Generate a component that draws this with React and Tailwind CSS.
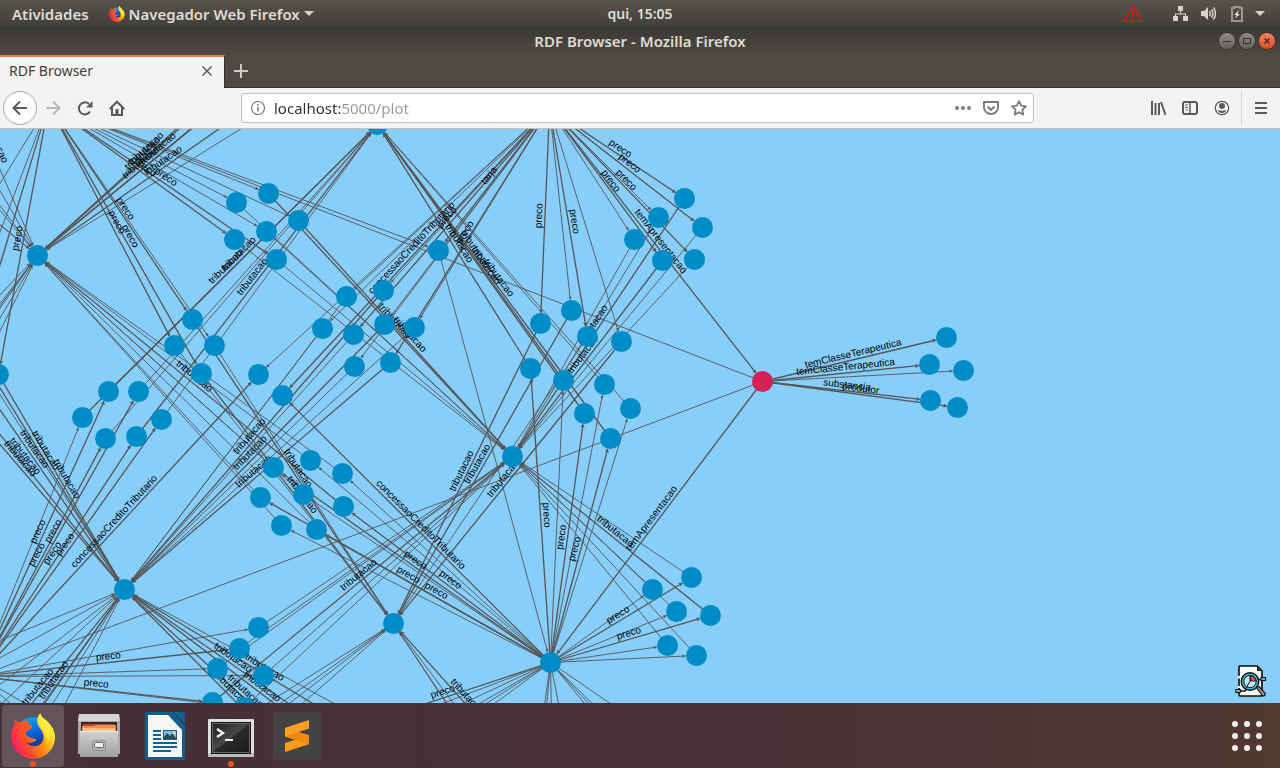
import React from "react";

/* ---------- Graph data ---------- */

const HUBS = {
  A: [37, 255],
  B: [124, 589],
  C: [393, 623],
  D: [550, 662],
  E: [512, 456],
  F: [377, 124],
  G: [549, 108],
  H: [48, 104],
  I: [-22, 676],
  K: [762, 381],
  T: [438, 250],
  U: [258, 374],
  V: [282, 395],
  W: [-2, 374],
};

const P = "preco";
const T = "tributacao";
const CC = "concessaoCreditoTributario";
const NONE = "";

/* Each group: points, the hub that feeds them, the hub they lead to,
   and which of the points carry a written label on either side. */
const GROUPS = [
  { from: "G", to: "E", pts: [[684, 198, 1, 1], [702, 227, 1, 0], [658, 217, 0, 0], [634, 239, 0, 0], [662, 260, 1, 1], [694, 259, 1, 0]] },
  { from: "G", to: "C", pts: [[540, 323, 1, 1], [571, 310, 0, 1], [587, 336, 1, 0], [621, 341, 0, 1]] },
  { from: "D", to: "F", pts: [[563, 380, 0, 1], [604, 384, 0, 0], [584, 413, 1, 1], [630, 408, 0, 0], [610, 438, 1, 1], [530, 368, 1, 1]] },
  { from: "G", to: "B", pts: [[346, 296, 0, 0], [383, 290, 0, 1], [322, 328, 0, 0], [353, 334, 1, 0], [384, 324, 0, 1], [414, 327, 0, 0], [354, 366, 0, 0], [390, 362, 1, 1]] },
  { from: "H", to: "E", pts: [[236, 202, 0, 0], [268, 193, 0, 1], [234, 239, 1, 0], [266, 231, 0, 0], [298, 220, 0, 1], [276, 259, 1, 0]] },
  { from: "H", to: "C", pts: [[192, 319, 1, 1], [174, 345, 1, 0], [214, 345, 0, 0], [201, 373, 1, 1]] },
  { from: "D", to: "A", pts: [[310, 460, 0, 0], [342, 473, 0, 0], [273, 467, 1, 0], [303, 494, 0, 0], [343, 506, 1, 1], [260, 497, 1, 0], [281, 525, 0, 0], [316, 529, 1, 0]] },
  { from: "I", to: "F", pts: [[108, 391, 1, 1], [138, 391, 1, 0], [82, 417, 0, 1], [105, 438, 1, 0], [136, 436, 1, 1], [161, 419, 1, 0]] },
  { from: "I", to: "E", pts: [[258, 627, 0, 0], [239, 648, 1, 0], [217, 668, 0, 0], [263, 675, 0, 0], [212, 702, 1, 1], [244, 707, 0, 0]] },
  { from: "D", to: "E", pts: [[652, 589, 0, 0], [691, 577, 1, 0], [676, 611, 0, 0], [710, 615, 1, 1], [667, 645, 0, 0], [696, 655, 0, 0]] },
];

const RIGHT_NODES = [
  [946, 337, "temClasseTerapeutica"],
  [929, 364, "temClasseTerapeutica"],
  [963, 370, NONE],
  [930, 400, "substancia"],
  [957, 407, "produtor"],
];

/* Edges whose other end lies outside the visible canvas. */
const INCOMING = {
  A: [
    [251, 79, T], [255, 60, T], [262, 50, T], [285, 50, T], [295, 75, T], [310, 85, NONE],
    [-50, 55, NONE], [-40, 122, NONE], [-60, 126, NONE], [-60, 138, NONE], [-70, 167, NONE], [-80, 160, NONE],
    [-60, 357, NONE], [-50, 366, NONE], [-42, 366, NONE], [-32, 370, NONE], [-56, 380, NONE], [-30, 390, NONE],
  ],
  B: [
    [-44, 317, T], [-60, 301, NONE], [-66, 315, T], [-94, 335, T], [-84, 330, T],
    [-30, 652, NONE], [-60, 690, NONE], [-70, 737, NONE], [-60, 760, NONE], [-40, 791, T], [-8, 777, T], [-20, 790, NONE], [30, 770, NONE], [10, 770, NONE],
    [334, 735, T], [392, 793, T], [398, 755, T], [328, 795, T], [358, 801, T], [420, 750, NONE],
  ],
  C: [[244, 717, NONE], [230, 738, NONE], [256, 728, NONE], [262, 738, NONE], [531, 777, T], [490, 770, NONE], [462, 726, NONE], [500, 765, NONE]],
};

const OUTGOING = {
  D: [
    [338, 732, P], [350, 738, NONE], [366, 748, NONE], [380, 760, NONE], [410, 765, NONE], [420, 745, NONE],
    [536, 760, NONE], [541, 765, NONE], [552, 770, NONE], [572, 775, NONE], [640, 770, NONE], [655, 775, NONE], [680, 790, NONE], [700, 765, NONE],
  ],
  H: [[-2, 374, P], [-30, 360, NONE], [-44, 410, NONE], [-38, 330, NONE], [-60, 280, NONE]],
  I: [[60, 745, NONE], [80, 735, NONE], [50, 760, NONE]],
};

const SPECIAL = [
  ["H", "T", NONE], ["G", "T", "tarja"], ["T", "D", NONE],
  ["G", "U", NONE], ["I", "U", CC], ["G", "V", CC], ["D", "V", CC],
  ["K", "H", NONE], ["K", "I", NONE], ["G", "K", "temApresentacao"], ["K", "D", "temApresentacao"],
  ["W", "B", T],
];

const pointKey = (p) => p[0] + "," + p[1];

function buildGraph() {
  const nodes = new Map();
  const edges = [];
  const link = (s, t, label) => edges.push({ s, t, label });
  Object.entries(HUBS).forEach(([name, p]) => nodes.set(pointKey(p), { p, root: name === "K" }));
  GROUPS.forEach((g) =>
    g.pts.forEach(([x, y, a, b]) => {
      const p = [x, y];
      nodes.set(pointKey(p), { p, root: false });
      link(HUBS[g.from], p, a ? P : NONE);
      link(p, HUBS[g.to], b ? T : NONE);
    })
  );
  RIGHT_NODES.forEach(([x, y, label]) => {
    nodes.set(pointKey([x, y]), { p: [x, y], root: false });
    link(HUBS.K, [x, y], label);
  });
  Object.entries(INCOMING).forEach(([h, list]) => list.forEach(([x, y, l]) => link([x, y], HUBS[h], l)));
  Object.entries(OUTGOING).forEach(([h, list]) => list.forEach(([x, y, l]) => link(HUBS[h], [x, y], l)));
  SPECIAL.forEach(([a, b, l]) => link(HUBS[a], HUBS[b], l));
  return { nodes: [...nodes.values()], edges };
}

const GRAPH = buildGraph();

function Edge({ s, t, label }) {
  const dx = t[0] - s[0];
  const dy = t[1] - s[1];
  const len = Math.hypot(dx, dy);
  const ux = dx / len;
  const uy = dy / len;
  const tip = [t[0] - ux * 10, t[1] - uy * 10];
  const base = [tip[0] - ux * 4, tip[1] - uy * 4];
  const w = label ? 2 : 1.5;
  return (
    <g>
      <line x1={s[0]} y1={s[1]} x2={base[0]} y2={base[1]} stroke="#555555" strokeWidth={label ? 1.3 : 0.9} />
      <polygon
        fill="#555555"
        points={`${tip[0]},${tip[1]} ${base[0] - uy * w},${base[1] + ux * w} ${base[0] + uy * w},${base[1] - ux * w}`}
      />
    </g>
  );
}

function EdgeLabel({ s, t, label }) {
  let a = (Math.atan2(t[1] - s[1], t[0] - s[0]) * 180) / Math.PI;
  if (a > 90) a -= 180;
  if (a < -90) a += 180;
  return (
    <text
      transform={`translate(${(s[0] + t[0]) / 2} ${(s[1] + t[1]) / 2}) rotate(${a})`}
      y={-3}
      textAnchor="middle"
    >
      {label}
    </text>
  );
}

function GraphCanvas() {
  return (
    <svg className="block size-full" role="img" aria-label="RDF graph">
      <g transform="translate(0.5 -128.500)">
        {GRAPH.edges.map((e, i) => <Edge key={i} {...e} />)}
        <g className="fill-black font-['Liberation_Sans',Arial,sans-serif] text-[10px]">
          {GRAPH.edges.filter((e) => e.label).map((e, i) => <EdgeLabel key={i} {...e} />)}
          <text transform="translate(-7 143) rotate(66)" textAnchor="middle">{T}</text>
        </g>
        {GRAPH.nodes.map(({ p, root }) => (
          <circle key={pointKey(p)} cx={p[0]} cy={p[1]} r="10.500" fill={root ? "#d32057" : "#008cc6"} />
        ))}
      </g>
    </svg>
  );
}

/* ---------- Icons ---------- */

function FirefoxIcon({ className, id }) {
  return (
    <svg viewBox="0 0 132 138" className={className} aria-hidden="true">
      <defs>
        <linearGradient id={id + "f"} x1="0" y1="0.75" x2="1" y2="0.25">
          <stop offset="0" stopColor="#f5156c" />
          <stop offset="0.3" stopColor="#ff4a2d" />
          <stop offset="0.62" stopColor="#ff980e" />
          <stop offset="0.85" stopColor="#ffe226" />
          <stop offset="1" stopColor="#fff44f" />
        </linearGradient>
        <linearGradient id={id + "b"} x1="0.3" y1="0" x2="0.6" y2="1">
          <stop offset="0" stopColor="#00a8f4" />
          <stop offset="0.5" stopColor="#0a5fd8" />
          <stop offset="1" stopColor="#1f2a7c" />
        </linearGradient>
      </defs>
      <circle cx="66" cy="62" r="50" fill={`url(#${id}b)`} />
      <path
        fill={`url(#${id}f)`}
        d="M12 18C16 27 21 30 28 28C36 22 46 22 54 25C51 32 54 37 64 39C63 46 58 51 48 54C42 60 43 67 52 71C60 77 70 75 77 80C68 88 60 92 46 88C58 104 84 104 94 86C102 72 96 56 84 42C74 28 77 13 88 1C92 16 104 18 112 28C122 40 132 52 132 72C132 108 104 137 66 137C30 137 2 110 0 72C-1 54 7 38 13 30C10 27 10 22 12 18Z"
      />
      <path fill="#ff3b30" d="M12 18C16 27 21 30 28 28C36 22 46 22 54 25C51 32 54 37 64 39C63 46 58 51 48 54C32 52 14 62 6 48C8 40 10 34 13 30Z" opacity="0.5" />
      <path fill="#fff44f" opacity="0.7" d="M88 1C92 16 104 20 112 34C120 52 118 76 108 94C106 74 100 58 88 43C76 28 78 12 88 1Z" />
    </svg>
  );
}

function FilesIcon() {
  return (
    <svg viewBox="0 0 48 48" className="size-12" aria-hidden="true">
      <defs>
        <linearGradient id="cab" x1="0" y1="0" x2="0" y2="1">
          <stop offset="0" stopColor="#d2d2d2" />
          <stop offset="1" stopColor="#a0a0a0" />
        </linearGradient>
      </defs>
      <path d="M4 2h40l1 9v31H3V11z" fill="#aaa" />
      <path d="M4 2h40l1 7H3z" fill="#d5d5d5" />
      <path d="M6 10h36v11H6z" fill="#352722" />
      <path d="M8 12h32v3H8z" fill="#b6452c" />
      <path d="M7 14h12l2-1h20v7H7z" fill="#f58b46" />
      <path d="M8 16h32v4H8z" fill="#ffc48a" />
      <path d="M5 19h38v26H5z" fill="url(#cab)" />
      <path d="M5 19h38v1H5z" fill="#eee" />
      <rect x="17.500" y="28.500" width="13" height="10" rx="2" fill="#b5b5b5" stroke="#8e8e8e" />
      <rect x="19.500" y="30.500" width="9" height="5" rx="1" fill="#f3f3f3" stroke="#666" />
    </svg>
  );
}

function WriterIcon() {
  return (
    <svg viewBox="0 0 48 48" className="size-12" aria-hidden="true">
      <path d="M6 0h25l13 14v32q0 2-2 2H6q-2 0-2-2V2q0-2 2-2z" fill="#10608f" />
      <path d="M7 3h20l14 15v27H7z" fill="#f6f6f6" />
      <path d="M32 0h10q2 0 2 2v10z" fill="#10608f" />
      <path d="M12 18h8v2h-8zM12 22h8v2h-8zM12 26h8v2h-8zM12 30h24v2H12zM12 34h24v2H12zM12 38h18v2H12z" fill="#15608f" />
      <path d="M22 18h14v10H22z" fill="#15608f" />
      <path d="M23 19h12v8H23z" fill="#7ac1ec" />
      <path d="M23 27v-2l3-4 3 3 2-3 4 5v1z" fill="#33424b" />
      <circle cx="33" cy="21" r="1.300" fill="#ffd75e" />
    </svg>
  );
}

function TerminalIcon() {
  return (
    <svg viewBox="0 0 48 48" className="size-12" aria-hidden="true">
      <defs>
        <linearGradient id="scr" x1="0" y1="0" x2="1" y2="1">
          <stop offset="0" stopColor="#222" />
          <stop offset="0.48" stopColor="#484848" />
          <stop offset="0.52" stopColor="#292929" />
          <stop offset="1" stopColor="#1b1b1b" />
        </linearGradient>
      </defs>
      <rect x="1" y="7" width="46" height="38" rx="1" fill="#dedede" />
      <path d="M1 41h46v4H1z" fill="#bcbcbc" />
      <rect x="4" y="10" width="40" height="32" fill="#111" />
      <rect x="5.500" y="11.500" width="37" height="29" fill="url(#scr)" stroke="#686868" />
      <path d="M10 17l6 4-6 4" fill="none" stroke="#eee" strokeWidth="2.400" />
      <path d="M18 27h8v2h-8z" fill="#eee" />
    </svg>
  );
}

function SublimeIcon() {
  return (
    <svg viewBox="0 0 48 48" className="size-12" aria-hidden="true">
      <rect width="48" height="48" rx="3" fill="#434343" />
      <path d="M12 31l24-8v8q0 1-1 1.500L12 40z" fill="#ff9a20" />
      <path d="M12 16v8q0 .8 1 1l22 7q1-.5 1-1v-7q0-1-1-1.300z" fill="#f28a12" />
      <path d="M12 24.500l24-8V8L13 15.500q-1 .5-1 1.500z" fill="#ff9d26" />
    </svg>
  );
}

const Caret = () => (
  <svg viewBox="0 0 10 5" className="h-[5px] w-[10px]" aria-hidden="true"><path d="M0 0h10L5 5z" fill="#d8d4cc" /></svg>
);

function Icon({ children, className = "size-4" }) {
  return (
    <svg viewBox="0 0 16 16" className={className} fill="none" stroke="currentColor" strokeWidth="2" aria-hidden="true">
      {children}
    </svg>
  );
}

function ReportIcon() {
  return (
    <svg viewBox="0 0 32 32" className="size-8" aria-hidden="true">
      <path d="M4 1h18l5 5v24q0 1-1 1H5q-1 0-1-1V2q0-1 1-1z" fill="#f6f7f7" stroke="#0a0a0a" strokeWidth="1.600" />
      <path d="M22.500 1v4.500H27z" fill="#444" stroke="#111" />
      <path d="M4 11v2.500M4 21v2" stroke="#f6f7f7" strokeWidth="2" />
      <path d="M1.500 26H10l4-5M20 14.500h8" fill="none" stroke="#111" strokeWidth="1.400" />
      <circle cx="15" cy="16.500" r="8.700" fill="#3cc0e4" stroke="#0a0a0a" strokeWidth="1.400" />
      <circle cx="15" cy="16.500" r="6.200" fill="#bcecf0" stroke="#111" />
      <path d="M15.500 16V11q5 .5 5.500 5z" fill="#e5485c" stroke="#111" strokeWidth="0.800" />
      <path d="M15 16.500L11 23M15 16.500V11" stroke="#111" fill="none" />
      <rect x="0.800" y="24.500" width="4.500" height="3" fill="#43c6e8" stroke="#111" />
      <rect x="26" y="12.500" width="4.500" height="3" fill="#43c6e8" stroke="#111" />
      <path d="M21.500 22.500L24 21.500l6 6.500q1 3-2.500 3z" fill="#9a9a9a" stroke="#111" strokeWidth="1.200" />
    </svg>
  );
}

/* ---------- Shell ---------- */

function TopBar() {
  return (
    <header className="grid h-[27px] shrink-0 grid-cols-[1fr_auto_1fr] items-center bg-linear-to-b from-[#57534a] to-[#42403b] px-3 text-[15px] leading-5 font-semibold text-[#dfdbd2]">
      <div className="flex items-center">
        <button type="button">Atividades</button>
        <button type="button" className="ml-5 flex items-center gap-1">
          <FirefoxIcon id="s" className="h-4 w-4" />
          <span>Navegador Web Firefox</span>
          <Caret />
        </button>
      </div>
      <button type="button" className="text-[14px]">qui, 15:05</button>
      <div className="flex items-center justify-end pr-[3px]">
        <svg viewBox="0 0 20 17" className="mr-[30px] h-[17px] w-5" role="img" aria-label="Alerta">
          <path d="M10 1L19 16.300H1z" fill="none" stroke="#f01010" strokeWidth="1.300" />
          <path d="M9 5.500h2v6H9zM9 13h2v2H9z" fill="#f01010" />
        </svg>
        <svg viewBox="0 0 15 15" className="mr-[13px] size-[15px]" fill="#d8d4cc" role="img" aria-label="Rede">
          <path d="M5 0h5v5H5zM0 10h5v5H0zM10 10h5v5h-5zM7 5h1v2.500h5V10h-1V8.500H3V10H2V7.500h5z" />
        </svg>
        <svg viewBox="0 0 15 15" className="mr-[15px] size-[15px]" role="img" aria-label="Volume">
          <path d="M0 5h3l4-4v13l-4-4H0z" fill="#d8d4cc" />
          <path d="M8.500 5q1.500 2.500 0 5M10.500 3.500q2.800 4 0 8M12.500 1.500q4 6 0 12" fill="none" stroke="#d8d4cc" strokeWidth="1.500" />
        </svg>
        <svg viewBox="0 0 12 16" className="mr-3 h-4 w-3" role="img" aria-label="Bateria">
          <path d="M3 2V1h6v1h2v13H1V2z" fill="none" stroke="#9c9890" strokeWidth="2" />
          <path d="M8 4L3 9h2.500L4 12.500 9 8H6.500z" fill="#e5e1d9" />
        </svg>
        <Caret />
      </div>
    </header>
  );
}

function WindowTitle() {
  const base = "flex size-4 items-center justify-center rounded-full shadow-[0_0_0_1px_#35332f]";
  return (
    <div className="grid h-7 shrink-0 grid-cols-[1fr_auto_1fr] items-center bg-linear-to-b from-[#3a3834] to-[#4f4b44] px-[5px]">
      <h1 className="col-start-2 text-[15px] leading-5 font-semibold text-[#dfdbd2]">RDF Browser - Mozilla Firefox</h1>
      <div className="flex justify-end gap-1 text-[#34322e]">
        <button type="button" aria-label="Minimizar" className={`${base} bg-linear-to-b from-[#8d8b85] to-[#66635c]`}>
          <Icon><path d="M4 8.500h8" strokeWidth="1" /></Icon>
        </button>
        <button type="button" aria-label="Maximizar" className={`${base} bg-linear-to-b from-[#8d8b85] to-[#66635c]`}>
          <Icon><rect x="4.500" y="5.500" width="7" height="5" strokeWidth="1" /></Icon>
        </button>
        <button type="button" aria-label="Fechar" className={`${base} bg-linear-to-b from-[#f5825c] to-[#df4a16]`}>
          <Icon><path d="M5.500 5.500l5 5M10.500 5.500l-5 5" strokeWidth="1.400" /></Icon>
        </button>
      </div>
    </div>
  );
}

function TabStrip() {
  return (
    <div className="flex h-[33px] shrink-0 border-b border-[#34322e] bg-[#4f4b44]">
      <div className="-mb-px flex w-[225px] items-center border-t-2 border-r border-t-[#f07746] border-r-[#34322e] bg-[#f4f3f2] pr-[11px] pb-1 pl-[9px]">
        <span className="flex-1 text-[14px] leading-5 text-[#3f3e3b]">RDF Browser</span>
        <button type="button" aria-label="Fechar aba" className="text-[#5c5b58]">
          <Icon className="size-3"><path d="M2 2l12 12M14 2L2 14" strokeWidth="2" /></Icon>
        </button>
      </div>
      <button type="button" aria-label="Nova aba" className="flex w-8 items-center justify-center text-[#cfccc5]">
        <Icon><path d="M8 1v14M1 8h14" /></Icon>
      </button>
    </div>
  );
}

function NavToolbar() {
  return (
    <nav className="flex h-[41px] shrink-0 items-center border-b border-[#c5c2bd] bg-[#f4f3f2] text-[#5b5a58]">
      <div className="flex w-[241px] items-center pl-[3px]">
        <button type="button" aria-label="Voltar" className="flex size-[34px] items-center justify-center rounded-full border border-[#adaba8] bg-[#fcfcfc]">
          <Icon><path d="M15 8H1.500M8 1.500L1.500 8 8 14.500" /></Icon>
        </button>
        <button type="button" aria-label="Avançar" className="ml-2 text-[#b9b8b6]">
          <Icon><path d="M1 8h13.500M8 1.500L14.500 8 8 14.500" /></Icon>
        </button>
        <button type="button" aria-label="Recarregar" className="ml-4">
          <Icon><path d="M13 11.500A6 6 0 1 1 12 4" /><path d="M15.500 1v6.500H9z" fill="currentColor" stroke="none" /></Icon>
        </button>
        <button type="button" aria-label="Página inicial" className="ml-4">
          <Icon><path d="M.7 9L8 1.700 15.300 9M3 7.500V15h10V7.500" /><path d="M6.500 9h3v6h-3z" fill="currentColor" stroke="none" /></Icon>
        </button>
      </div>
      <div className="flex h-[30px] flex-1 items-center rounded-[3px] border border-[#c3c1be] bg-white px-2 text-[#7c7b79]">
        <Icon><circle cx="8" cy="8" r="6.500" strokeWidth="1.200" /><path d="M8 7v4.500M8 4v1.600" strokeWidth="1.600" /></Icon>
        <input
          aria-label="Endereço"
          defaultValue="localhost:5000/plot"
          className="mx-2 min-w-0 flex-1 bg-[linear-gradient(90deg,#2e2e2c_66px,#9a9996_66px)] bg-clip-text text-[15px] leading-5 text-transparent caret-black outline-none"
        />
        <div className="flex items-center gap-3">
          <button type="button" aria-label="Ações da página">
            <Icon><g fill="currentColor" stroke="none"><circle cx="2" cy="8" r="2" /><circle cx="8" cy="8" r="2" /><circle cx="14" cy="8" r="2" /></g></Icon>
          </button>
          <button type="button" aria-label="Salvar no Pocket">
            <Icon><path d="M1 2h14v5.500a7 6.500 0 0 1-14 0z" strokeLinejoin="round" /><path d="M4.500 6.500L8 9.800l3.500-3.300" /></Icon>
          </button>
          <button type="button" aria-label="Adicionar aos favoritos" className="-mr-[2px]">
            <Icon><path d="M8 1.200l2.100 4.500 4.900.6-3.600 3.400.9 4.900L8 12.200l-4.300 2.400.9-4.900L1 6.300l4.900-.6z" strokeLinejoin="round" strokeWidth="1.800" /></Icon>
          </button>
        </div>
      </div>
      <div className="flex w-[246px] items-center justify-end self-stretch">
        <button type="button" aria-label="Biblioteca" className="mr-4">
          <Icon><path d="M2 1v14M5.500 3v12M9 3v12M11 2l4.500 13" /></Icon>
        </button>
        <button type="button" aria-label="Painel lateral" className="mr-4">
          <Icon><rect x="1" y="2" width="14" height="12" rx="2" /><path d="M8 2v12" strokeWidth="1.500" /><path d="M3 5h3M3 7.500h3M4 10h2" strokeWidth="1" /></Icon>
        </button>
        <button type="button" aria-label="Conta" className="mr-[11px]">
          <Icon><circle cx="8" cy="8" r="6.700" strokeWidth="1.200" /><g fill="currentColor" stroke="none"><circle cx="8" cy="6" r="3" /><path d="M3.500 10q4.500 1.500 9 0Q11 13 8 13t-4.500-3z" /></g></Icon>
        </button>
        <div className="flex items-center self-stretch py-[3px]">
          <button type="button" aria-label="Menu" className="flex h-full w-[39px] items-center justify-center border-l border-[#d3d1ce]">
            <Icon><path d="M2 3h12M2 8h12M2 13h12" /></Icon>
          </button>
        </div>
      </div>
    </nav>
  );
}

function DockItem({ label, running, active, children }) {
  return (
    <button
      type="button"
      aria-label={label}
      className={`relative flex size-[62px] items-center justify-center rounded-[3px] ${active ? "bg-[#63535a]" : ""}`}
    >
      {children}
      {running && <span className="absolute bottom-0 left-1/2 size-[6px] -translate-x-1/2 rounded-full bg-[#e95420]" />}
    </button>
  );
}

function Dock() {
  return (
    <footer className="flex h-[65px] shrink-0 items-center justify-between bg-linear-to-r from-[#453138] via-[#492f38] to-[#523832] px-[2px]">
      <div className="flex gap-1">
        <DockItem label="Firefox" running active><FirefoxIcon id="l" className="h-[46px] w-11" /></DockItem>
        <DockItem label="Arquivos"><FilesIcon /></DockItem>
        <DockItem label="LibreOffice Writer"><WriterIcon /></DockItem>
        <DockItem label="Terminal" running><TerminalIcon /></DockItem>
        <DockItem label="Sublime Text"><SublimeIcon /></DockItem>
      </div>
      <button type="button" aria-label="Mostrar aplicativos" className="flex size-[62px] items-center justify-center">
        <svg viewBox="0 0 30 30" className="size-[30px]" fill="#f2f0ee" aria-hidden="true">
          {[3, 15, 27].map((y) => [3, 15, 27].map((x) => <circle key={x + "-" + y} cx={x} cy={y} r="3" />))}
        </svg>
      </button>
    </footer>
  );
}

export default function App() {
  return (
    <div className="flex h-screen flex-col overflow-hidden font-['Noto_Sans',sans-serif]">
      <TopBar />
      <WindowTitle />
      <TabStrip />
      <NavToolbar />
      <main className="relative min-h-0 flex-1 bg-[#87cefa]">
        <GraphCanvas />
        <button type="button" aria-label="Buscar" className="absolute right-[13px] bottom-[6px]"><ReportIcon /></button>
      </main>
      <Dock />
    </div>
  );
}
